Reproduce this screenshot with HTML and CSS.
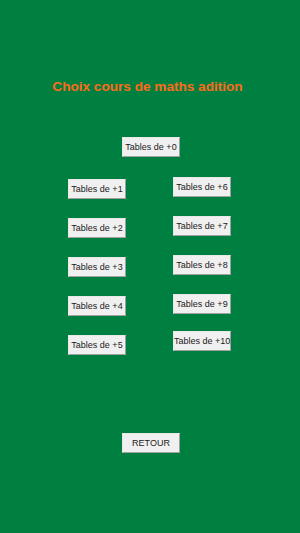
FILE: index.html
```html
<!DOCTYPE html>
<html>
<head>
<meta charset="utf-8">
<link rel="stylesheet" href="styles.css">
</head>
<body>
<div class="screen">
  <h1 class="title">Choix cours de maths adition</h1>
  <div class="top-row"><button class="btn">Tables de +0</button></div>
  <div class="cols">
    <div class="col col-left">
      <button class="btn">Tables de +1</button>
      <button class="btn">Tables de +2</button>
      <button class="btn">Tables de +3</button>
      <button class="btn">Tables de +4</button>
      <button class="btn">Tables de +5</button>
    </div>
    <div class="col col-right">
      <button class="btn">Tables de +6</button>
      <button class="btn">Tables de +7</button>
      <button class="btn">Tables de +8</button>
      <button class="btn">Tables de +9</button>
      <button class="btn btn-last">Tables de +10</button>
    </div>
  </div>
  <div class="bottom-row"><button class="btn">RETOUR</button></div>
</div>
</body>
</html>
```

FILE: styles.css
```css
html, body {
  margin: 0;
  padding: 0;
  background: #008040;
}
.screen {
  width: 300px;
  height: 533px;
  display: flex;
  flex-direction: column;
  align-items: center;
  font-family: "Liberation Sans", Arial, sans-serif;
}
.title {
  margin: 79px 5px 0 0;
  height: 16px;
  line-height: 16px;
  font-size: 13.6px;
  font-weight: bold;
  color: #ff6a1a;
  text-align: center;
}
.btn {
  box-sizing: border-box;
  width: 58px;
  height: 20px;
  padding: 0;
  margin: 0;
  font-family: "Liberation Sans", Arial, sans-serif;
  font-size: 9px;
  color: #1a1a1a;
  background: #f0f0f0;
  border: 1px solid;
  border-color: #e8e8e8 #a0a0a0 #a0a0a0 #e8e8e8;
  border-radius: 0;
  white-space: nowrap;
}
.top-row {
  margin-top: 42px;
  display: flex;
  justify-content: center;
  width: 100%;
  padding-left: 2px;
  box-sizing: border-box;
}
.cols {
  margin-top: 22px;
  display: flex;
  width: 100%;
  padding-left: 68px;
  box-sizing: border-box;
  gap: 47px;
}
.col {
  display: flex;
  flex-direction: column;
  gap: 19px;
}
.col-right {
  margin-top: -2px;
}
.btn-last {
  margin-top: -2px;
}
.bottom-row {
  margin-top: 78px;
  display: flex;
  justify-content: center;
  width: 100%;
  padding-left: 2px;
  box-sizing: border-box;
}
```
